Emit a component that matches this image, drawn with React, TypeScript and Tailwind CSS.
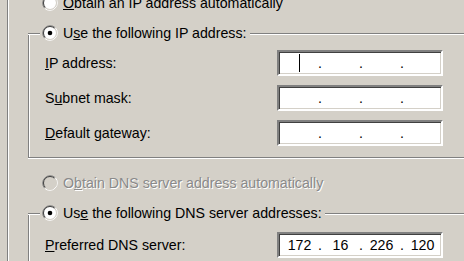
import React from "react";

const BG = "#d4d0c8";

function Radio({ checked, disabled }: { checked?: boolean; disabled?: boolean }) {
  return (
    <svg width="16" height="16" viewBox="0 0 16 16" className="shrink-0 block">
      <circle cx="8" cy="8" r="6.2" fill={disabled ? BG : "#ffffff"} />
      <path d="M2.7 13.3 A7.5 7.5 0 0 1 13.3 2.7" fill="none" stroke="#808080" strokeWidth="1" />
      <path d="M3.4 12.6 A6.5 6.5 0 0 1 12.6 3.4" fill="none" stroke="#404040" strokeWidth="1" />
      <path d="M13.3 2.7 A7.5 7.5 0 0 1 2.7 13.3" fill="none" stroke="#ffffff" strokeWidth="1" />
      <path d="M12.6 3.4 A6.5 6.5 0 0 1 3.4 12.6" fill="none" stroke={BG} strokeWidth="1" />
      {checked && <circle cx="8" cy="8" r="2.3" fill={disabled ? "#808080" : "#000000"} />}
    </svg>
  );
}

function Line({ className = "" }: { className?: string }) {
  return <div className={`mt-[9px] border-t border-[#808080] shadow-[0_1px_0_#ffffff] ${className}`} />;
}

function Header({ children, checked }: { children: React.ReactNode; checked?: boolean }) {
  return (
    <div className="-mt-[9px] -ml-px flex h-[18px] items-start">
      <Line className="w-[12px]" />
      <div className="ml-[2px] flex h-[18px] items-center bg-[#d4d0c8] pr-[3px]">
        <Radio checked={checked} />
        <span className="ml-[5px] whitespace-nowrap">{children}</span>
      </div>
      <Line className="flex-1" />
    </div>
  );
}

function IpBox({ values, caret }: { values?: string[]; caret?: boolean }) {
  const v = values ?? ["", "", "", ""];
  return (
    <div className="flex h-[26px] w-[166px] shrink-0 items-center border-2 border-t-[#808080] border-l-[#808080] border-b-white border-r-white bg-white pl-[2px] shadow-[inset_1px_1px_0_#404040,inset_-1px_-1px_0_#d4d0c8]">
      {v.map((x, i) => (
        <React.Fragment key={i}>
          {i > 0 && <span className="w-[4px] text-center">.</span>}
          <span className="flex flex-1 items-center justify-center">
            {caret && i === 0 ? <span className="inline-block h-[18px] w-px bg-black" /> : x}
          </span>
        </React.Fragment>
      ))}
    </div>
  );
}

function Row({ label, children }: { label: React.ReactNode; children: React.ReactNode }) {
  return (
    <div className="flex h-[26px] items-center pl-[16px]">
      <span className="w-[232px] shrink-0 whitespace-nowrap">{label}</span>
      {children}
    </div>
  );
}

const groupCls =
  "ml-[20px] flex flex-col border-l border-b border-[#808080] shadow-[inset_1px_0_0_#ffffff,0_1px_0_#ffffff]";

export default function App() {
  return (
    <div className="h-[261px] w-[464px] overflow-hidden bg-[#d4d0c8] font-['Liberation_Sans',Arial,sans-serif] text-[14.2px] leading-none text-black">
      <div className="ml-[7px] flex h-full flex-col border-l border-[#808080] shadow-[inset_1px_0_0_#ffffff]">
        <div className="-mt-[6px] ml-[34px] flex h-[18px] shrink-0 items-center">
          <Radio />
          <span className="ml-[5px] whitespace-nowrap">
            <u>O</u>btain an IP address automatically
          </span>
        </div>

        <div className={`mt-[21px] shrink-0 pb-[11px] ${groupCls}`}>
          <Header checked>
            U<u>s</u>e the following IP address:
          </Header>
          <div className="mt-[8px] flex flex-col gap-[9px]">
            <Row label={<><u>I</u>P address:</>}>
              <IpBox caret />
            </Row>
            <Row label={<>S<u>u</u>bnet mask:</>}>
              <IpBox />
            </Row>
            <Row label={<><u>D</u>efault gateway:</>}>
              <IpBox />
            </Row>
          </div>
        </div>

        <div className="mt-[16px] ml-[34px] flex h-[18px] shrink-0 items-center">
          <Radio disabled />
          <span className="ml-[5px] whitespace-nowrap text-[#8a8a8a] [text-shadow:1px_1px_0_#ffffff]">
            O<u>b</u>tain DNS server address automatically
          </span>
        </div>

        <div className={`mt-[21px] shrink-0 pb-[11px] ${groupCls}`}>
          <Header checked>
            Us<u>e</u> the following DNS server addresses:
          </Header>
          <div className="mt-[10px] flex flex-col gap-[9px]">
            <Row label={<><u>P</u>referred DNS server:</>}>
              <IpBox values={["172", "16", "226", "120"]} />
            </Row>
          </div>
        </div>
      </div>
    </div>
  );
}
